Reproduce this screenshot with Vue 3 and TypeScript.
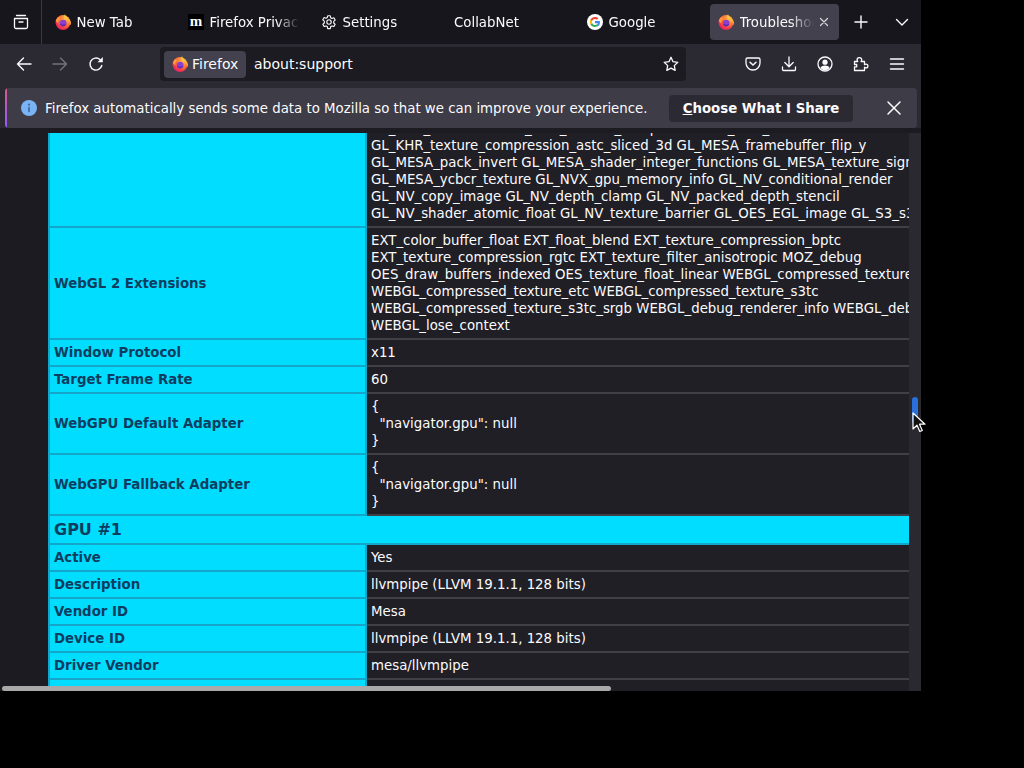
<script setup lang="ts">
interface Tab { title: string; icon: 'firefox' | 'moz' | 'gear' | 'google' | 'none'; active?: boolean }
interface Row { label: string; value?: string; group?: boolean }

const tabs: Tab[] = [
  { title: 'New Tab', icon: 'firefox' },
  { title: 'Firefox Privacy Notice', icon: 'moz' },
  { title: 'Settings', icon: 'gear' },
  { title: 'CollabNet', icon: 'none' },
  { title: 'Google', icon: 'google' },
  { title: 'Troubleshooting Information', icon: 'firefox', active: true },
]

const rows: Row[] = [
  {
    label: '',
    value: [
      'GL_KHR_robustness GL_KHR_texture_compression GL_KHR_shader',
      'GL_KHR_texture_compression_astc_sliced_3d GL_MESA_framebuffer_flip_y',
      'GL_MESA_pack_invert GL_MESA_shader_integer_functions GL_MESA_texture_signed_rgba',
      'GL_MESA_ycbcr_texture GL_NVX_gpu_memory_info GL_NV_conditional_render',
      'GL_NV_copy_image GL_NV_depth_clamp GL_NV_packed_depth_stencil',
      'GL_NV_shader_atomic_float GL_NV_texture_barrier GL_OES_EGL_image GL_S3_s3tc',
    ].join('\n'),
  },
  {
    label: 'WebGL 2 Extensions',
    value: [
      'EXT_color_buffer_float EXT_float_blend EXT_texture_compression_bptc',
      'EXT_texture_compression_rgtc EXT_texture_filter_anisotropic MOZ_debug',
      'OES_draw_buffers_indexed OES_texture_float_linear WEBGL_compressed_texture_astc',
      'WEBGL_compressed_texture_etc WEBGL_compressed_texture_s3tc',
      'WEBGL_compressed_texture_s3tc_srgb WEBGL_debug_renderer_info WEBGL_debug_shaders',
      'WEBGL_lose_context',
    ].join('\n'),
  },
  { label: 'Window Protocol', value: 'x11' },
  { label: 'Target Frame Rate', value: '60' },
  { label: 'WebGPU Default Adapter', value: '{\n  "navigator.gpu": null\n}' },
  { label: 'WebGPU Fallback Adapter', value: '{\n  "navigator.gpu": null\n}' },
  { label: 'GPU #1', group: true },
  { label: 'Active', value: 'Yes' },
  { label: 'Description', value: 'llvmpipe (LLVM 19.1.1, 128 bits)' },
  { label: 'Vendor ID', value: 'Mesa' },
  { label: 'Device ID', value: 'llvmpipe (LLVM 19.1.1, 128 bits)' },
  { label: 'Driver Vendor', value: 'mesa/llvmpipe' },
  { label: 'Driver Version', value: '19.1.1.0' },
]
</script>

<template>
  <div class="desktop">
    <svg class="defs" aria-hidden="true">
      <defs>
        <radialGradient id="ffBody" cx="0.7" cy="0.25" r="0.95">
          <stop offset="0" stop-color="#ffbd4f" />
          <stop offset="0.4" stop-color="#ff7a33" />
          <stop offset="0.72" stop-color="#f5304f" />
          <stop offset="1" stop-color="#d01a8c" />
        </radialGradient>
        <linearGradient id="ffFlame" x1="0.5" y1="0" x2="0.5" y2="1">
          <stop offset="0" stop-color="#ffe14d" />
          <stop offset="1" stop-color="#ff8a2b" />
        </linearGradient>
        <symbol id="firefox" viewBox="0 0 16 16">
          <circle cx="8" cy="8.500" r="7.500" fill="url(#ffBody)" />
          <path d="M10 0c.2 2.200 1.600 3 3 4.200 1.500 1.300 3 3 3 4.900 0 .8-.2 1.900-.5 2.500-.3-3-2.400-5.300-5.100-5.900C9.100 5.300 9 2.100 10 0z" fill="url(#ffFlame)" />
          <path d="M.8 6.800C1.500 4.800 3 3.300 4.400 2.600c-.2.900.1 1.700.9 2.200C3.900 5.800 3 7.400 3.300 9.400 2.200 9 1.300 8 .8 6.800z" fill="#ff9a3c" />
          <circle cx="8.200" cy="9" r="3.300" fill="#8a3fd1" />
          <path d="M4.900 9.500c1.500 1.300 4.200 1.500 6.500.2-.4 1.600-1.800 2.700-3.300 2.700s-2.800-1.300-3.200-2.900z" fill="#5b2bb8" />
        </symbol>
      </defs>
    </svg>

    <div class="browser">
      <header class="tabbar">
        <div class="view-btn">
          <svg viewBox="0 0 16 16" class="ico16">
            <path d="M3.500 1.500h9M1.500 4.500h13v8.500a1.500 1.500 0 0 1-1.500 1.500H3A1.500 1.500 0 0 1 1.500 13zM6 8h4" fill="none" stroke="#fbfbfe" stroke-width="1.300" stroke-linecap="round" stroke-linejoin="round" />
          </svg>
        </div>
        <div v-for="t in tabs" :key="t.title" class="tab" :class="{ active: t.active }">
          <svg v-if="t.icon === 'firefox'" class="ico16"><use href="#firefox" /></svg>
          <span v-else-if="t.icon === 'moz'" class="moz">m</span>
          <svg v-else-if="t.icon === 'gear'" class="ico16" viewBox="0 0 16 16">
            <path d="M6.700 .8h2.600l.4 2 1.300.7 1.900-.7 1.300 2.300-1.500 1.300v1.600l1.500 1.300-1.300 2.300-1.900-.7-1.300.7-.4 2H6.700l-.4-2-1.300-.7-1.900.7-1.300-2.300 1.500-1.300V6.100L1.800 4.800l1.300-2.300 1.900.7 1.300-.7z" fill="none" stroke="#fbfbfe" stroke-width="1.100" stroke-linejoin="round" transform="translate(0 1)" />
            <circle cx="8" cy="8" r="2.200" fill="none" stroke="#fbfbfe" stroke-width="1.100" />
          </svg>
          <svg v-else-if="t.icon === 'google'" class="ico16" viewBox="0 0 16 16">
            <circle cx="8" cy="8" r="8" fill="#fff" />
            <path d="M12.900 8.200c0-.4 0-.8-.1-1.100H8v2.100h2.800c-.1.700-.5 1.200-1 1.600l1.600 1.300c1-.9 1.500-2.200 1.500-3.900z" fill="#4285f4" />
            <path d="M8 13c1.400 0 2.500-.5 3.400-1.200l-1.600-1.300c-.5.300-1.100.5-1.800.5-1.300 0-2.500-.9-2.900-2.100L3.400 10.200C4.200 11.900 6 13 8 13z" fill="#34a853" />
            <path d="M5.100 8.900C4.900 8.300 4.900 7.700 5.100 7.100L3.400 5.800c-.7 1.400-.7 3 0 4.400z" fill="#fbbc05" />
            <path d="M8 5c.8 0 1.400.3 1.900.8l1.500-1.500C10.500 3.500 9.400 3 8 3 6 3 4.200 4.100 3.400 5.800l1.700 1.300C5.500 5.900 6.700 5 8 5z" fill="#ea4335" />
          </svg>
          <span class="tab-title">{{ t.title }}</span>
          <svg v-if="t.active" class="tab-close" viewBox="0 0 10 10">
            <path d="M1.500 1.500l7 7M8.500 1.500l-7 7" stroke="#d5d5da" stroke-width="1.300" stroke-linecap="round" />
          </svg>
        </div>
        <div class="tab-btn plus">
          <svg class="ico16" viewBox="0 0 16 16"><path d="M8 2v12M2 8h12" stroke="#fbfbfe" stroke-width="1.400" stroke-linecap="round" /></svg>
        </div>
        <div class="tab-btn">
          <svg class="ico16" viewBox="0 0 16 16"><path d="M2.500 5.500L8 11l5.500-5.500" fill="none" stroke="#fbfbfe" stroke-width="1.400" stroke-linecap="round" stroke-linejoin="round" /></svg>
        </div>
      </header>

      <nav class="toolbar">
        <div class="nav-btn">
          <svg class="ico16" viewBox="0 0 16 16"><path d="M15 8H1.500M7.500 2L1.500 8l6 6" fill="none" stroke="#fbfbfe" stroke-width="1.400" stroke-linecap="round" stroke-linejoin="round" /></svg>
        </div>
        <div class="nav-btn dim">
          <svg class="ico16" viewBox="0 0 16 16"><path d="M1 8h13.500M8.500 2l6 6-6 6" fill="none" stroke="#fbfbfe" stroke-width="1.400" stroke-linecap="round" stroke-linejoin="round" /></svg>
        </div>
        <div class="nav-btn">
          <svg class="ico16" viewBox="0 0 16 16">
            <path d="M13.800 9.500A6 6 0 1 1 12 3.600" fill="none" stroke="#fbfbfe" stroke-width="1.400" stroke-linecap="round" />
            <path d="M14.800 1v5.300H9.500z" fill="#fbfbfe" />
          </svg>
        </div>
        <div class="urlbar">
          <div class="identity">
            <svg class="ico16"><use href="#firefox" /></svg>
            <span>Firefox</span>
          </div>
          <span class="url">about:support</span>
          <svg class="ico16 star" viewBox="0 0 16 16">
            <path d="M8 1.300l2 4.400 4.800.6-3.500 3.300.9 4.800L8 12.100l-4.200 2.300.9-4.800L1.200 6.300 6 5.700z" fill="none" stroke="#fbfbfe" stroke-width="1.300" stroke-linejoin="round" />
          </svg>
        </div>
        <div class="nav-right">
          <div class="nav-btn">
            <svg class="ico16" viewBox="0 0 16 16">
              <path d="M2.500 2h11A1.500 1.500 0 0 1 15 3.500V7a7 7 0 0 1-14 0V3.500A1.500 1.500 0 0 1 2.500 2z" fill="none" stroke="#fbfbfe" stroke-width="1.300" />
              <path d="M5 6.200l3 2.800 3-2.800" fill="none" stroke="#fbfbfe" stroke-width="1.500" stroke-linecap="round" stroke-linejoin="round" />
            </svg>
          </div>
          <div class="nav-btn">
            <svg class="ico16" viewBox="0 0 16 16">
              <path d="M8 1v9.500M3.800 6.500L8 10.700l4.200-4.200M1.500 11v2.500a1 1 0 0 0 1 1h11a1 1 0 0 0 1-1V11" fill="none" stroke="#fbfbfe" stroke-width="1.300" stroke-linecap="round" stroke-linejoin="round" />
            </svg>
          </div>
          <div class="nav-btn">
            <svg class="ico16" viewBox="0 0 16 16">
              <circle cx="8" cy="8" r="7" fill="none" stroke="#fbfbfe" stroke-width="1.300" />
              <circle cx="8" cy="6.200" r="2.600" fill="#fbfbfe" />
              <path d="M3.300 12c1-1.800 2.800-2.500 4.700-2.500s3.700.7 4.700 2.500A6.500 6.500 0 0 1 8 14.300 6.500 6.500 0 0 1 3.300 12z" fill="#fbfbfe" />
            </svg>
          </div>
          <div class="nav-btn">
            <svg class="ico16" viewBox="0 0 16 16">
              <path d="M1.500 5.500h3.200c-.4-.5-.6-1-.6-1.500a2.300 2.300 0 0 1 4.600-.2c0 .6-.2 1.200-.6 1.700h3.400v3.200c.5-.4 1-.6 1.500-.6a1.900 1.900 0 0 1 0 3.800c-.5 0-1-.2-1.500-.6v3.200h-10v-3.700h2.200v-2.300H1.500z" fill="none" stroke="#fbfbfe" stroke-width="1.300" stroke-linejoin="round" />
            </svg>
          </div>
          <div class="nav-btn">
            <svg class="ico16" viewBox="0 0 16 16"><path d="M1.500 3h13M1.500 8h13M1.500 13h13" stroke="#fbfbfe" stroke-width="1.400" stroke-linecap="round" /></svg>
          </div>
        </div>
      </nav>

      <div class="notice-wrap">
        <div class="notice">
          <svg class="ico16 info" viewBox="0 0 16 16">
            <circle cx="8" cy="8" r="8" fill="#7ab4f5" />
            <rect x="7.100" y="6.800" width="1.800" height="5.400" rx=".6" fill="#3d6ea8" />
            <circle cx="8" cy="4.700" r="1.100" fill="#3d6ea8" />
          </svg>
          <span class="notice-text">Firefox automatically sends some data to Mozilla so that we can improve your experience.</span>
          <button class="share"><u>C</u>hoose What I Share</button>
          <svg class="ico16 notice-x" viewBox="0 0 16 16">
            <path d="M2 2l12 12M14 2L2 14" stroke="#fbfbfe" stroke-width="1.500" stroke-linecap="round" />
          </svg>
        </div>
      </div>

      <main class="page">
        <div class="viewport">
          <table class="support">
            <colgroup>
              <col class="col-th" />
              <col />
            </colgroup>
            <tbody>
              <tr v-for="(r, i) in rows" :key="i">
                <th v-if="r.group" colspan="2" class="group">{{ r.label }}</th>
                <template v-else>
                  <th>{{ r.label }}</th>
                  <td>{{ r.value }}</td>
                </template>
              </tr>
            </tbody>
          </table>
        </div>
        <div class="vscroll"><div class="vthumb"></div></div>
        <div class="hthumb"></div>
        <svg class="cursor" viewBox="0 0 14 22">
          <path d="M1 1v16l4-3.800 2.800 6.300 2.500-1.100L7.500 12.200H13z" fill="#111" stroke="#fff" stroke-width="1.200" stroke-linejoin="round" />
        </svg>
      </main>
    </div>
  </div>
</template>

<style>
html, body { margin: 0; background: #000; }
</style>

<style scoped>
.desktop {
  width: 1024px;
  height: 768px;
  background: #000;
  overflow: hidden;
  font-family: "DejaVu Sans", sans-serif;
  font-size: 13.33px;
  color: #fbfbfe;
}
.defs { position: absolute; width: 0; height: 0; }
.browser {
  width: 921px;
  height: 691px;
  display: flex;
  flex-direction: column;
  background: #1c1b22;
}
.ico16 { width: 16px; height: 16px; flex: none; display: block; }

.tabbar {
  height: 44px;
  flex: none;
  display: flex;
  align-items: center;
  background: #17161c;
}
.view-btn {
  width: 41px;
  height: 44px;
  flex: none;
  display: flex;
  align-items: center;
  justify-content: center;
  border-right: 1px solid #3a3940;
  margin-right: 2px;
}
.tab {
  width: 129px;
  height: 36px;
  flex: none;
  margin: 0 2px;
  padding: 0 8px 0 9px;
  box-sizing: border-box;
  display: flex;
  align-items: center;
  gap: 5.5px;
  border-radius: 4px;
  overflow: hidden;
}
.tab.active { background: #42414d; margin-left: 1px; margin-right: 3px; padding-left: 8px; }
.tab-title {
  flex: 1;
  min-width: 0;
  white-space: nowrap;
  overflow: hidden;
  -webkit-mask-image: linear-gradient(to right, #000 calc(100% - 24px), transparent);
  mask-image: linear-gradient(to right, #000 calc(100% - 24px), transparent);
}
.tab-close { width: 10px; height: 10px; flex: none; margin-right: 2px; }
.moz {
  width: 16px;
  height: 16px;
  background: #000;
  color: #fff;
  font-family: "Liberation Serif", serif;
  font-weight: 700;
  font-size: 15px;
  line-height: 14px;
  text-align: center;
  flex: none;
}
.tab-btn {
  width: 40px;
  height: 44px;
  flex: none;
  display: flex;
  align-items: center;
  justify-content: center;
}
.tab-btn.plus { margin-left: -1px; margin-right: 1px; }

.toolbar {
  height: 44px;
  flex: none;
  display: flex;
  align-items: center;
  padding: 0 6px 4px;
  box-sizing: border-box;
  background: #2b2a33;
}
.nav-btn {
  width: 36px;
  height: 36px;
  flex: none;
  display: flex;
  align-items: center;
  justify-content: center;
}
.nav-btn.dim { opacity: 0.35; }
.urlbar {
  margin-left: 46px;
  width: 526px;
  height: 34px;
  flex: none;
  display: flex;
  align-items: center;
  padding: 0 7px 0 4px;
  box-sizing: border-box;
  background: #1c1b22;
  border-radius: 4px;
}
.identity {
  height: 27px;
  width: 82px;
  flex: none;
  display: flex;
  align-items: center;
  gap: 4px;
  padding-left: 8px;
  box-sizing: border-box;
  background: #42414d;
  border-radius: 4px;
  font-size: 14px;
}
.url { margin-left: 8px; flex: 1; font-size: 14px; }
.nav-right { margin-left: auto; display: flex; }

.notice-wrap {
  height: 45px;
  flex: none;
  padding: 0 4px 0 5px;
  box-sizing: border-box;
  background: linear-gradient(#2b2a33 0, #2b2a33 40px, #1c1b22 40px);
}
.notice {
  height: 40px;
  display: flex;
  align-items: center;
  padding-left: 16px;
  box-sizing: border-box;
  background: #3d3c47;
  border-radius: 4px;
  position: relative;
  overflow: hidden;
}
.notice::before {
  content: "";
  position: absolute;
  left: 0;
  top: 0;
  bottom: 0;
  width: 2px;
  background: linear-gradient(#d85a8a, #9059ff);
}
.notice-text { margin-left: 8px; white-space: nowrap; }
.share {
  margin-left: auto;
  width: 184px;
  height: 27px;
  border: 0;
  border-radius: 4px;
  background: #2b2a33;
  color: #fbfbfe;
  font: 700 13.33px "DejaVu Sans", sans-serif;
  padding: 0;
}
.notice-x { margin-left: 33px; margin-right: 15px; }

.page {
  flex: 1;
  min-height: 0;
  display: flex;
  position: relative;
  background: #1c1b22;
}
.viewport {
  width: 909px;
  flex: none;
  overflow: hidden;
  padding-left: 48px;
  box-sizing: border-box;
}
.support {
  width: 1300px;
  table-layout: fixed;
  border-collapse: collapse;
  margin-top: -19px;
  line-height: 17px;
}
.col-th { width: 317px; }
.support th, .support td {
  padding: 4px;
  text-align: left;
  border: 2px solid #403f47;
}
.support th {
  background: #00ddff;
  color: #0c3d61;
  font-weight: 700;
  border-color: #13a6ca;
}
.support th.group { font-size: 16px; line-height: 19px; }
.support td {
  background: #201f26;
  color: #fbfbfe;
  white-space: pre;
  overflow: hidden;
}
.vscroll {
  width: 12px;
  flex: none;
  background: #2a2930;
  box-sizing: border-box;
  padding: 264px 3px 0;
}
.vthumb { height: 26px; background: #2a6fdb; border-radius: 3px; }
.hthumb {
  position: absolute;
  left: 2px;
  bottom: 0;
  width: 609px;
  height: 5px;
  background: #a9a9a9;
  border-radius: 3px;
}
.cursor {
  position: absolute;
  left: 912px;
  top: 279px;
  width: 14px;
  height: 22px;
}
</style>
